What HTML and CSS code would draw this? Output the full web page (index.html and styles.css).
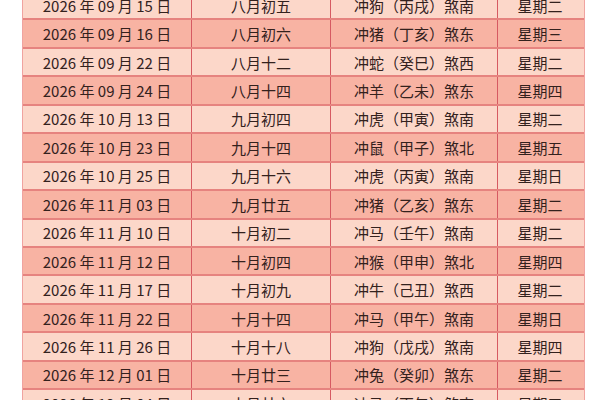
FILE: index.html
```html
<!DOCTYPE html>
<html lang="zh">
<head>
<meta charset="utf-8">
<link rel="stylesheet" href="styles.css">
</head>
<body>
<div class="table">
  <div class="row light"><div class="c">2026 年 09 月 15 日</div><div class="c">八月初五</div><div class="c">冲狗（丙戌）煞南</div><div class="c">星期二</div></div>
  <div class="row dark"><div class="c">2026 年 09 月 16 日</div><div class="c">八月初六</div><div class="c">冲猪（丁亥）煞东</div><div class="c">星期三</div></div>
  <div class="row light"><div class="c">2026 年 09 月 22 日</div><div class="c">八月十二</div><div class="c">冲蛇（癸巳）煞西</div><div class="c">星期二</div></div>
  <div class="row dark"><div class="c">2026 年 09 月 24 日</div><div class="c">八月十四</div><div class="c">冲羊（乙未）煞东</div><div class="c">星期四</div></div>
  <div class="row light"><div class="c">2026 年 10 月 13 日</div><div class="c">九月初四</div><div class="c">冲虎（甲寅）煞南</div><div class="c">星期二</div></div>
  <div class="row dark"><div class="c">2026 年 10 月 23 日</div><div class="c">九月十四</div><div class="c">冲鼠（甲子）煞北</div><div class="c">星期五</div></div>
  <div class="row light"><div class="c">2026 年 10 月 25 日</div><div class="c">九月十六</div><div class="c">冲虎（丙寅）煞南</div><div class="c">星期日</div></div>
  <div class="row dark"><div class="c">2026 年 11 月 03 日</div><div class="c">九月廿五</div><div class="c">冲猪（乙亥）煞东</div><div class="c">星期二</div></div>
  <div class="row light"><div class="c">2026 年 11 月 10 日</div><div class="c">十月初二</div><div class="c">冲马（壬午）煞南</div><div class="c">星期二</div></div>
  <div class="row dark"><div class="c">2026 年 11 月 12 日</div><div class="c">十月初四</div><div class="c">冲猴（甲申）煞北</div><div class="c">星期四</div></div>
  <div class="row light"><div class="c">2026 年 11 月 17 日</div><div class="c">十月初九</div><div class="c">冲牛（己丑）煞西</div><div class="c">星期二</div></div>
  <div class="row dark"><div class="c">2026 年 11 月 22 日</div><div class="c">十月十四</div><div class="c">冲马（甲午）煞南</div><div class="c">星期日</div></div>
  <div class="row light"><div class="c">2026 年 11 月 26 日</div><div class="c">十月十八</div><div class="c">冲狗（戊戌）煞南</div><div class="c">星期四</div></div>
  <div class="row dark"><div class="c">2026 年 12 月 01 日</div><div class="c">十月廿三</div><div class="c">冲兔（癸卯）煞东</div><div class="c">星期二</div></div>
  <div class="row light"><div class="c">2026 年 12 月 04 日</div><div class="c">十月廿六</div><div class="c">冲马（丙午）煞南</div><div class="c">星期五</div></div>
</div>
</body>
</html>
```
FILE: styles.css
```css
html, body {
  margin: 0;
  padding: 0;
  background: #ffffff;
  overflow: hidden;
}
.table {
  margin: -8px 0 0 22px;
  width: 561px;
  border-left: 1px solid #f0a3a0;
  border-right: 1px solid #f0a3a0;
  font-family: "Noto Sans CJK SC", "Noto Sans", sans-serif;
  font-size: 15px;
  color: #33211d;
}
.row {
  display: grid;
  grid-template-columns: 168px 139px 167px 85px;
  height: 28.44px;
  box-sizing: border-box;
  border-bottom: 2px solid #e6837f;
}
.row.light { background: #fcd7c9; }
.row.dark { background: #f8b3a3; }
.c {
  display: flex;
  align-items: center;
  justify-content: center;
  white-space: nowrap;
  line-height: 1;
}
.c + .c {
  border-left: 1px solid #d65a62;
}
```
